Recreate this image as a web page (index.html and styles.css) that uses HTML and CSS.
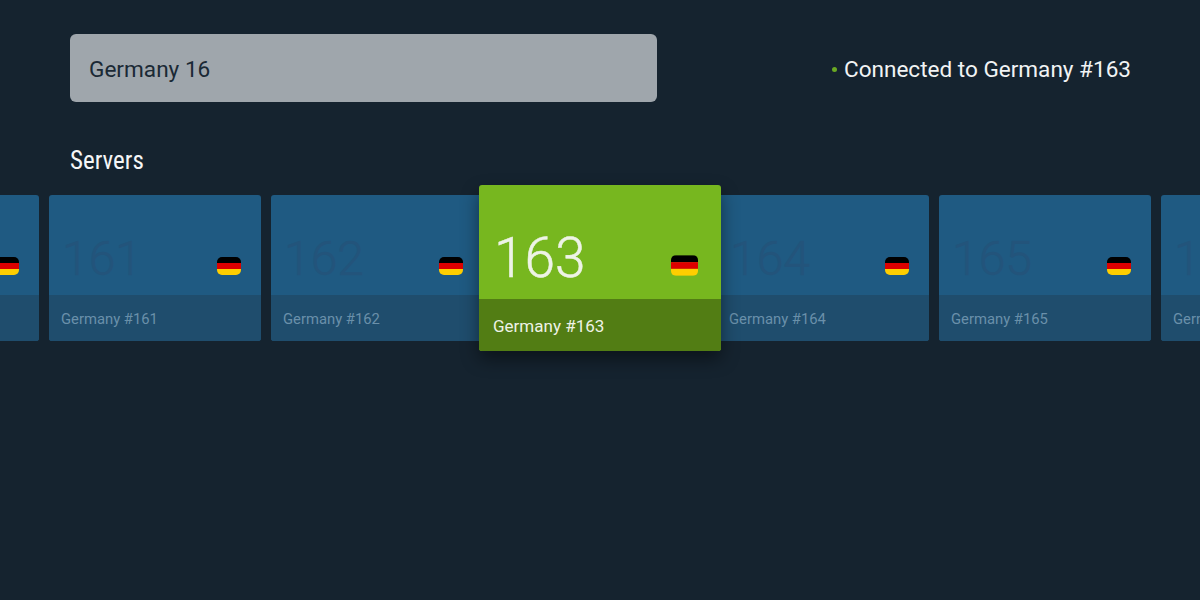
FILE: index.html
```html
<!DOCTYPE html>
<html lang="en">
<head>
    <meta charset="UTF-8">
    <meta name="viewport" content="width=device-width, initial-scale=1.0">
    <title>Servers</title>
    <link rel="stylesheet" href="styles.css">
</head>
<body>
    <div class="top-bar">
        <div class="search-box">Germany 16</div>
        <div class="status"><span class="status-dot"></span>Connected to Germany #163</div>
    </div>

    <h2 class="section-title">Servers</h2>

    <div class="server-row">
        <div class="server-card">
            <div class="card-main">
                <span class="card-number">160</span>
                <svg class="flag" viewBox="0 0 24 18"><rect width="24" height="6" fill="#000"/><rect y="6" width="24" height="6" fill="#dd0000"/><rect y="12" width="24" height="6" fill="#ffce00"/></svg>
            </div>
            <div class="card-label">Germany #160</div>
        </div>
        <div class="server-card">
            <div class="card-main">
                <span class="card-number">161</span>
                <svg class="flag" viewBox="0 0 24 18"><rect width="24" height="6" fill="#000"/><rect y="6" width="24" height="6" fill="#dd0000"/><rect y="12" width="24" height="6" fill="#ffce00"/></svg>
            </div>
            <div class="card-label">Germany #161</div>
        </div>
        <div class="server-card">
            <div class="card-main">
                <span class="card-number">162</span>
                <svg class="flag" viewBox="0 0 24 18"><rect width="24" height="6" fill="#000"/><rect y="6" width="24" height="6" fill="#dd0000"/><rect y="12" width="24" height="6" fill="#ffce00"/></svg>
            </div>
            <div class="card-label">Germany #162</div>
        </div>
        <div class="server-card selected">
            <div class="card-main">
                <span class="card-number">163</span>
                <svg class="flag" viewBox="0 0 24 18"><rect width="24" height="6" fill="#000"/><rect y="6" width="24" height="6" fill="#dd0000"/><rect y="12" width="24" height="6" fill="#ffce00"/></svg>
            </div>
            <div class="card-label">Germany #163</div>
        </div>
        <div class="server-card">
            <div class="card-main">
                <span class="card-number">164</span>
                <svg class="flag" viewBox="0 0 24 18"><rect width="24" height="6" fill="#000"/><rect y="6" width="24" height="6" fill="#dd0000"/><rect y="12" width="24" height="6" fill="#ffce00"/></svg>
            </div>
            <div class="card-label">Germany #164</div>
        </div>
        <div class="server-card">
            <div class="card-main">
                <span class="card-number">165</span>
                <svg class="flag" viewBox="0 0 24 18"><rect width="24" height="6" fill="#000"/><rect y="6" width="24" height="6" fill="#dd0000"/><rect y="12" width="24" height="6" fill="#ffce00"/></svg>
            </div>
            <div class="card-label">Germany #165</div>
        </div>
        <div class="server-card">
            <div class="card-main">
                <span class="card-number">166</span>
                <svg class="flag" viewBox="0 0 24 18"><rect width="24" height="6" fill="#000"/><rect y="6" width="24" height="6" fill="#dd0000"/><rect y="12" width="24" height="6" fill="#ffce00"/></svg>
            </div>
            <div class="card-label">Germany #166</div>
        </div>
    </div>
</body>
</html>
```

FILE: styles.css
```css
/* Page */
html, body {
    height: 100%;
}
body {
    font-family: Roboto, "Liberation Sans", sans-serif;
    background-color: #15232f;
    margin: 0;
    overflow: hidden;
}

/* Search + connection status */
.top-bar {
    display: flex;
    align-items: center;
    justify-content: space-between;
    padding: 34px 69px 0 70px;
}
.search-box {
    width: 568px;
    height: 66px;
    padding: 2px 0 0 19px;
    display: flex;
    align-items: center;
    background-color: #9fa6ac;
    border-radius: 6px;
    color: #1a2935;
    font-size: 22.6px;
}
.status {
    display: flex;
    align-items: center;
    padding-top: 2px;
    color: #f1f3f4;
    font-size: 22.55px;
}
.status-dot {
    width: 5px;
    height: 5px;
    margin-right: 7px;
    border-radius: 50%;
    background-color: #6aa823;
}

.section-title {
    margin: 45px 0 0 70px;
    height: 48px;
    color: #f5f6f7;
    font-size: 25px;
    font-weight: 400;
    line-height: 28px;
    font-stretch: condensed;
}

/* Server cards */
.server-row {
    display: flex;
    align-items: center;
    gap: 10px;
    height: 166px;
    margin-left: -173px;
    margin-top: -10px;
}
.server-card {
    flex: none;
    width: 212px;
    height: 146px;
    display: flex;
    flex-direction: column;
    border-radius: 3px;
    overflow: hidden;
    background-color: #1f5a82;
}
.card-main {
    height: 100px;
    display: flex;
    align-items: flex-end;
    justify-content: space-between;
    padding: 0 20px 20px 13px;
    box-sizing: border-box;
}
.card-number {
    color: #23547b;
    font-size: 48px;
    font-weight: 300;
    -webkit-text-stroke: 0.5px #23547b;
    line-height: 54px;
    margin-bottom: -11px;
}
.flag {
    width: 24px;
    height: 18px;
    border-radius: 5px;
}
.card-label {
    flex: 1;
    display: flex;
    align-items: center;
    padding: 2px 0 0 12px;
    background-color: #1f4d6d;
    color: #6a90aa;
    font-size: 14.8px;
}

.server-card.selected {
    width: 242px;
    height: 166px;
    margin: 0 -14px;
    position: relative;
    z-index: 1;
    background-color: #77b71f;
    box-shadow: 0 8px 18px rgba(0, 0, 0, 0.45);
}
.selected .card-main {
    height: 114px;
    padding: 0 23px 23px 15px;
}
.selected .card-number {
    color: #eef3e6;
    -webkit-text-stroke: 0.5px #eef3e6;
    font-size: 55px;
    line-height: 62px;
    margin-bottom: -13px;
}
.selected .flag {
    width: 27px;
    height: 21px;
    border-radius: 5px;
}
.selected .card-label {
    padding: 2px 0 0 14px;
    background-color: #527d14;
    color: #eef2e6;
    font-size: 17px;
}
```
